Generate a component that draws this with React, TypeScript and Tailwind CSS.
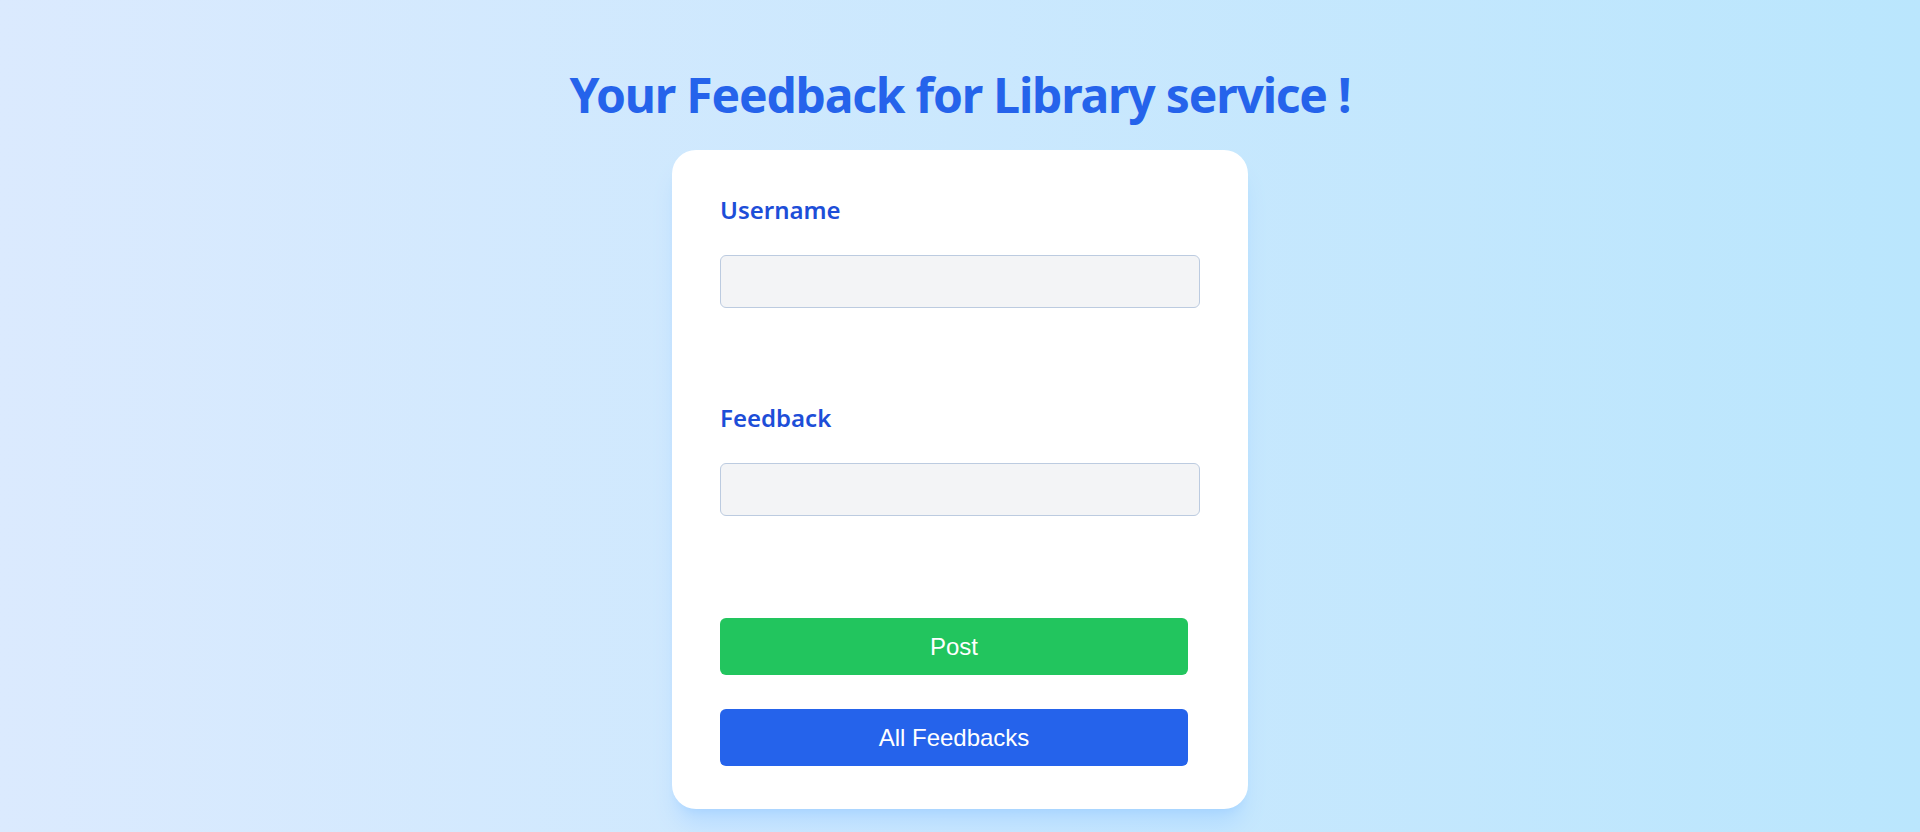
import React from 'react';

const App: React.FC = () => {
  const labelStyle = "block text-2xl font-semibold text-[#1d4ed8] leading-8";
  const inputStyle = "block w-full h-[53px] rounded-md border border-[#bccbe0] bg-[#f3f4f6] px-3 text-lg outline-none";
  const buttonStyle = "block w-[468px] h-[57px] rounded-md text-white text-2xl font-['Liberation_Sans',Arial,sans-serif]";
  return (
    <div className="min-h-screen w-full bg-gradient-to-r from-[#dbeafe] to-[#bae6fd] font-['Noto_Sans','Open_Sans',sans-serif]">
      <div className="flex flex-col items-center pt-[67px]">
        <h1 className="text-5xl font-bold text-[#2563eb] leading-[56px] tracking-tight">Your Feedback for Library service !</h1>
        <form className="mt-[27px] w-[576px] rounded-3xl bg-white px-12 pt-[44px] pb-[43px] shadow-xl shadow-blue-300/40" onSubmit={(e) => e.preventDefault()}>
          <label className={labelStyle}>Username</label>
          <input type="text" className={`${inputStyle} mt-[29px]`} />
          <label className={`${labelStyle} mt-[94px]`}>Feedback</label>
          <input type="text" className={`${inputStyle} mt-[29px]`} />
          <button type="submit" className={`${buttonStyle} mt-[102px] bg-[#22c55e]`}>Post</button>
          <button type="button" className={`${buttonStyle} mt-[34px] bg-[#2563eb]`}>All Feedbacks</button>
        </form>
      </div>
    </div>
  );
};

export default App;
